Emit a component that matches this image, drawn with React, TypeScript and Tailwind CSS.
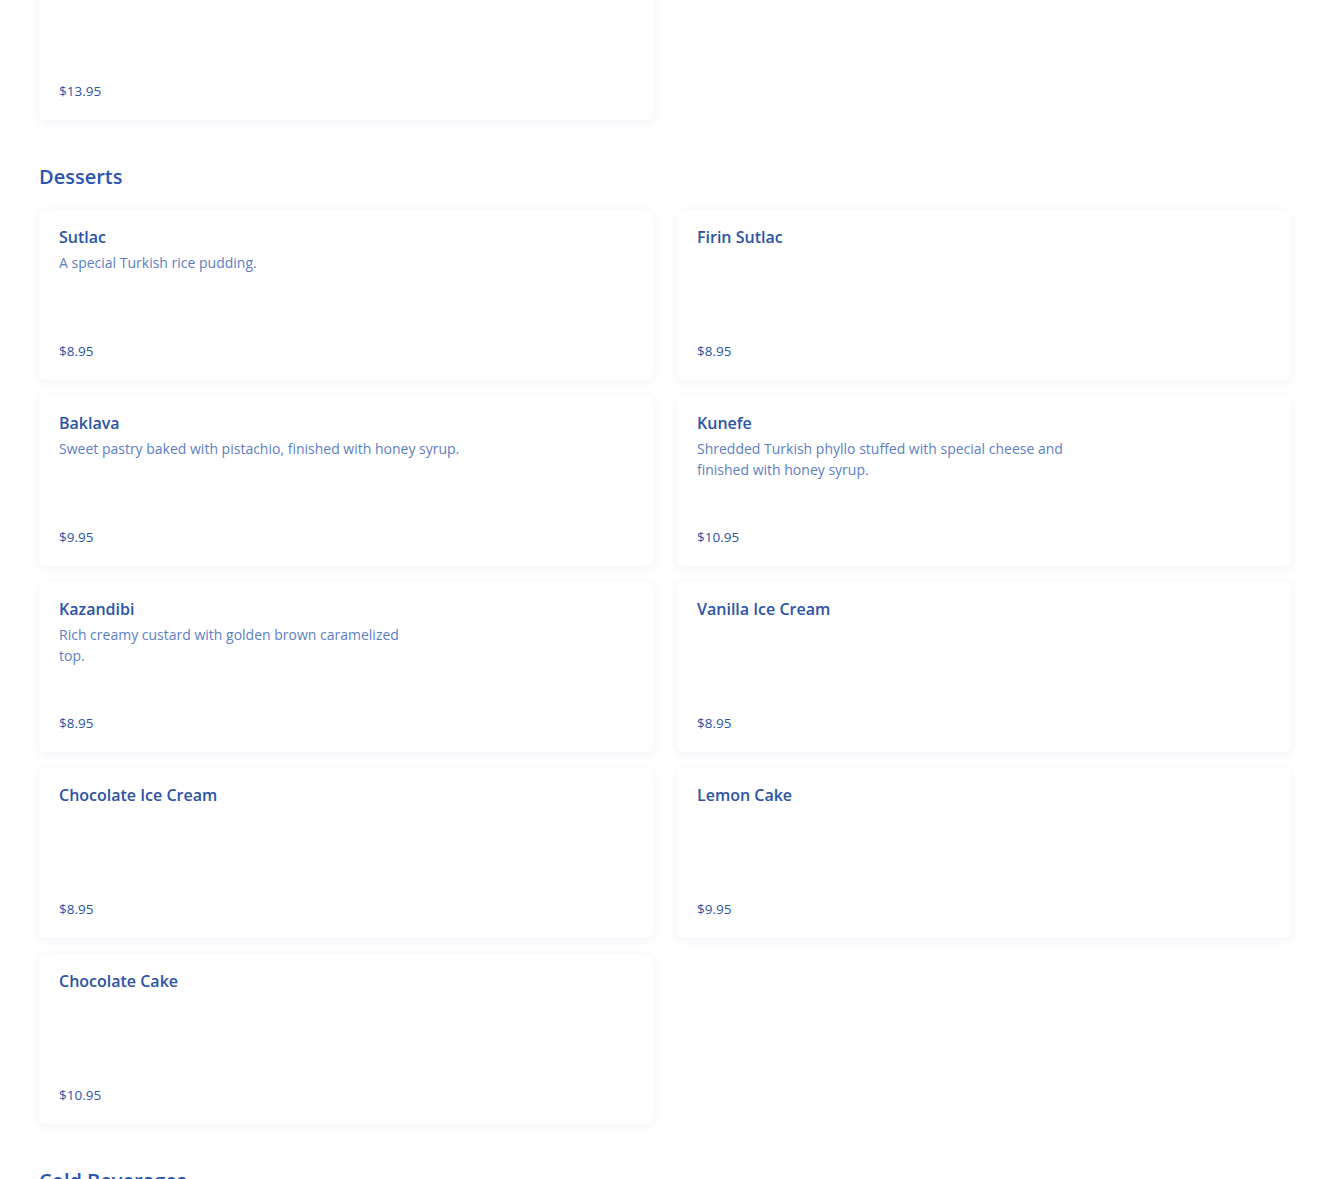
import React from 'react';

interface MenuItem {
  name: string;
  description?: string;
  price: string;
}

const desserts: MenuItem[] = [
  { name: 'Sutlac', description: 'A special Turkish rice pudding.', price: '$8.95' },
  { name: 'Firin Sutlac', price: '$8.95' },
  { name: 'Baklava', description: 'Sweet pastry baked with pistachio, finished with honey syrup.', price: '$9.95' },
  { name: 'Kunefe', description: 'Shredded Turkish phyllo stuffed with special cheese and\nfinished with honey syrup.', price: '$10.95' },
  { name: 'Kazandibi', description: 'Rich creamy custard with golden brown caramelized\ntop.', price: '$8.95' },
  { name: 'Vanilla Ice Cream', price: '$8.95' },
  { name: 'Chocolate Ice Cream', price: '$8.95' },
  { name: 'Lemon Cake', price: '$9.95' },
  { name: 'Chocolate Cake', price: '$10.95' },
];

const MenuCard: React.FC<{ item: MenuItem }> = ({ item }) => (
  <div className="flex h-[170px] flex-col rounded-md bg-white px-5 pt-[17px] pb-[19px] shadow-[0_2px_10px_rgba(40,70,140,0.07)]">
    <h3 className="text-[16px] leading-5 font-semibold text-[#2b53a6]">{item.name}</h3>
    {item.description && (
      <p className="mt-[5px] whitespace-pre-line text-[14px] leading-[21px] text-[#5c7ec3]">{item.description}</p>
    )}
    <div className="mt-auto text-[13.5px] leading-5 text-[#2b53a6]">{item.price}</div>
  </div>
);

const Section: React.FC<{ title: string; items: MenuItem[] }> = ({ title, items }) => (
  <section className="mt-[43px]">
    <h2 className="mb-[19px] text-[20px] leading-7 font-semibold text-[#2b55b3]">{title}</h2>
    <div className="grid grid-cols-2 gap-x-6 gap-y-4">
      {items.map((item) => (
        <MenuCard key={item.name} item={item} />
      ))}
    </div>
  </section>
);

export default function App() {
  return (
    <div className="h-[1179px] overflow-hidden bg-white" style={{ fontFamily: '"Open Sans", Lato, sans-serif' }}>
      <div className="-mt-[50px] px-[39px]">
        <div className="grid grid-cols-2 gap-x-6">
          <div className="flex h-[170px] flex-col rounded-md bg-white px-5 pt-[17px] pb-[19px] shadow-[0_2px_10px_rgba(40,70,140,0.07)]">
            <div className="mt-auto text-[13.5px] leading-5 text-[#2b53a6]">$13.95</div>
          </div>
        </div>
        <Section title="Desserts" items={desserts} />
        <Section title="Cold Beverages" items={[]} />
      </div>
    </div>
  );
}
